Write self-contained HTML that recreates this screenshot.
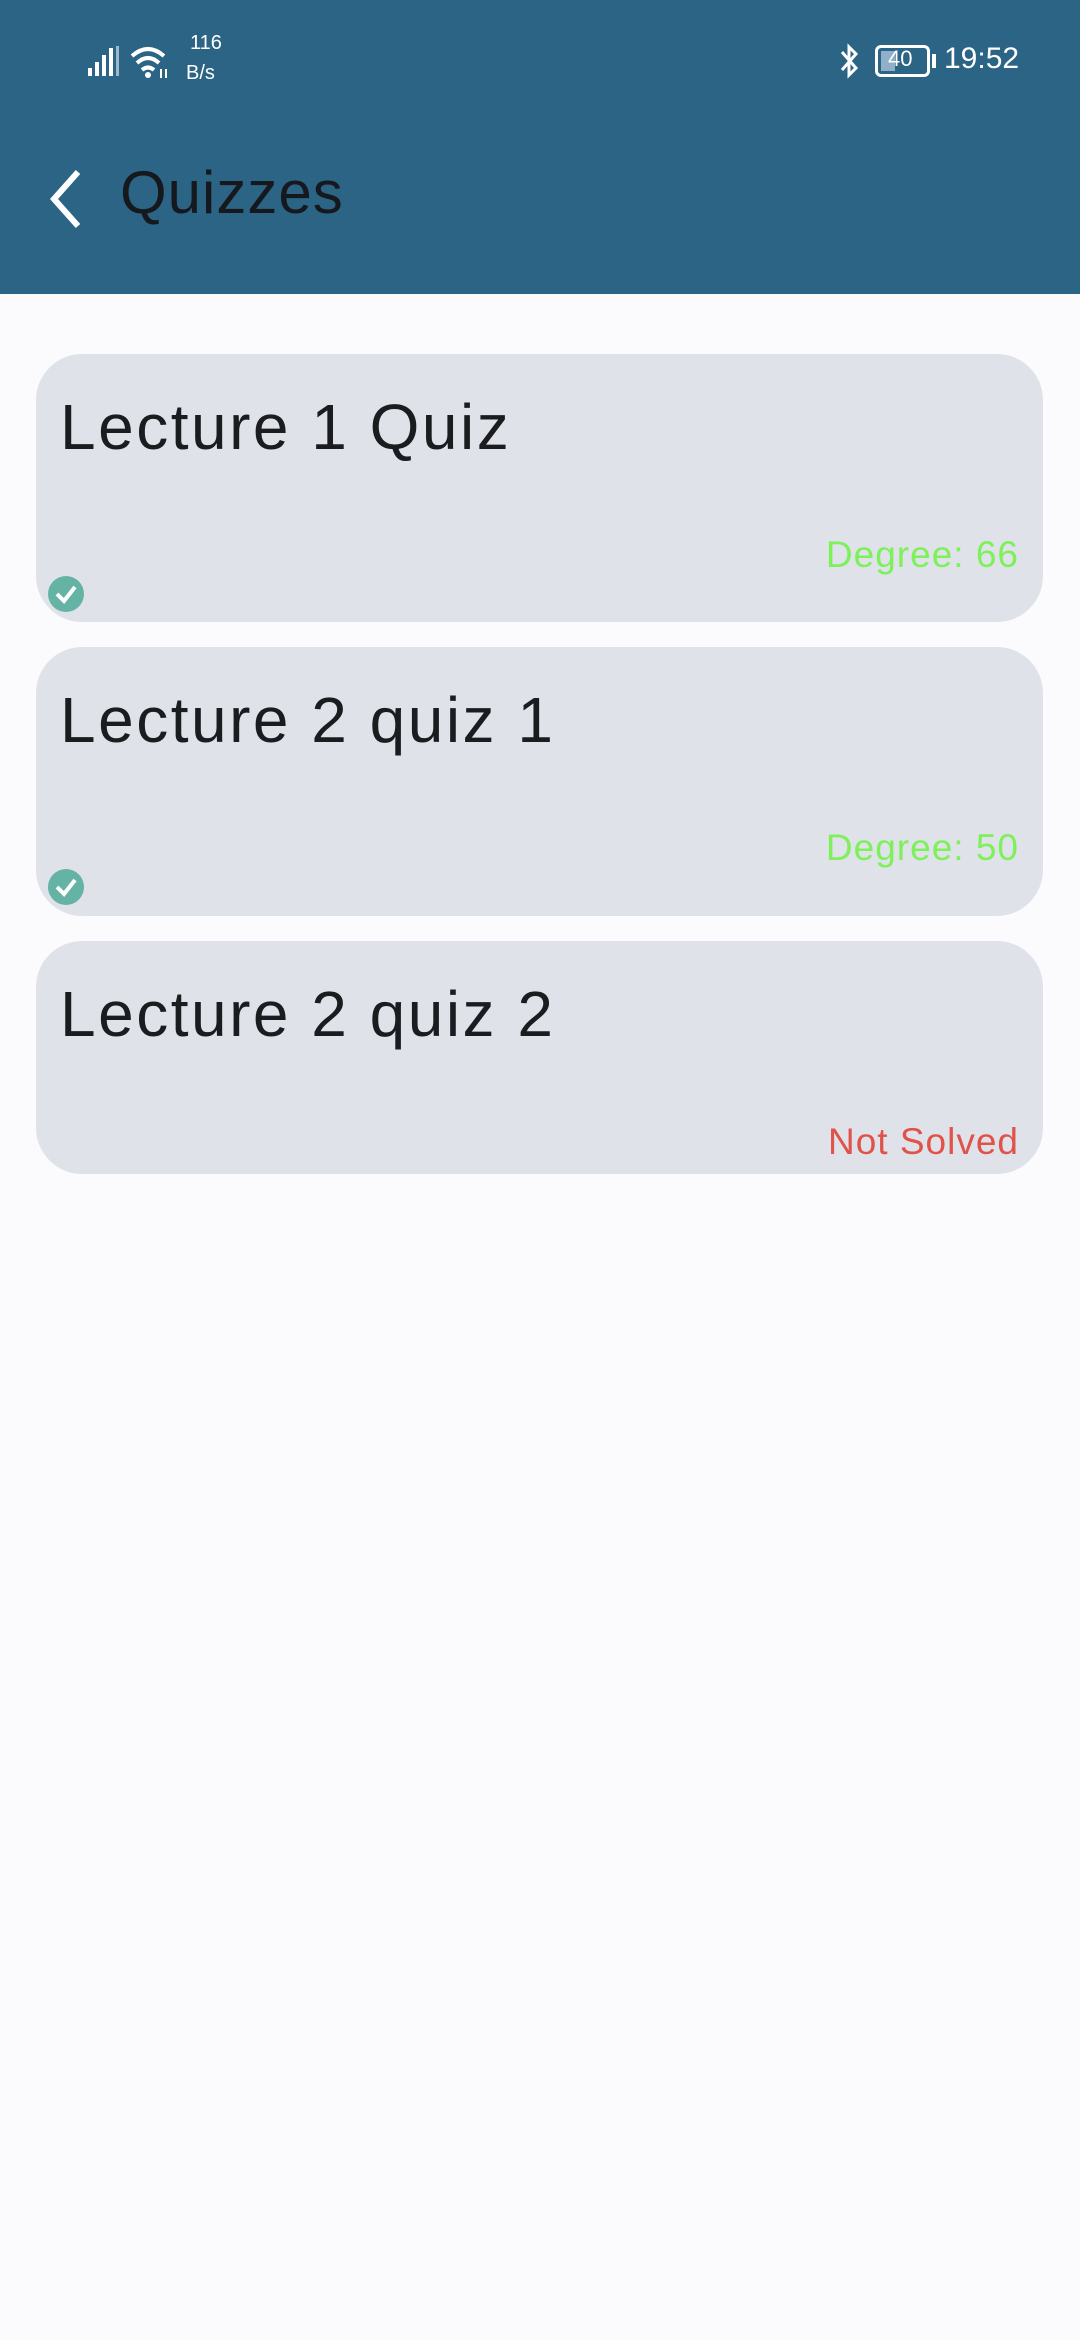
<!DOCTYPE html>
<html><head><meta charset="utf-8"><style>
*{margin:0;padding:0;box-sizing:border-box}
body{width:1080px;height:2340px;background:#fbfbfd;font-family:"Liberation Sans",sans-serif;position:relative;overflow:hidden}
.hdr{position:absolute;left:0;top:0;width:1080px;height:294px;background:#2c6486}
.st{position:absolute;color:#fff;font-size:30px}
.card{position:absolute;left:36px;width:1007px;background:#dfe3e9;border-radius:46px}
.t{position:absolute;left:24px;top:36px;font-size:64px;color:#1a1c20;letter-spacing:2.5px}
.d{position:absolute;right:24px;font-size:37px;color:#7ef05a;letter-spacing:1px}
.ck{position:absolute;left:12px;width:36px;height:36px;border-radius:50%;background:#65b3a4}
</style></head><body>
<div class="hdr">
<svg style="position:absolute;left:86px;top:44px" width="36" height="34"><rect x="2" y="24" width="4" height="8" fill="#fff"/><rect x="9" y="18" width="4" height="14" fill="#fff"/><rect x="16" y="11" width="4" height="21" fill="#fff"/><rect x="23" y="4" width="4" height="28" fill="#fff"/><rect x="30" y="2" width="3" height="30" fill="#9bb8cc"/></svg>
<svg style="position:absolute;left:128px;top:44px" width="46" height="36"><path d="M4 12 Q20 -2 36 12" stroke="#fff" stroke-width="4" fill="none"/><path d="M9 19 Q20 9 31 19" stroke="#fff" stroke-width="4" fill="none"/><path d="M14 26 Q20 21 26 26" stroke="#fff" stroke-width="4" fill="none"/><circle cx="20" cy="31" r="3" fill="#fff"/><path d="M33 25 v9 M38 25 v9" stroke="#fff" stroke-width="2"/></svg>
<div class="st" style="left:190px;top:32px;font-size:20px">116</div>
<div class="st" style="left:186px;top:62px;font-size:20px">B/s</div>
<svg style="position:absolute;left:834px;top:42px" width="30" height="38"><path d="M8 10 L22 26 L15 33 V5 L22 12 L8 28" stroke="#fff" stroke-width="3" fill="none"/></svg>
<div style="position:absolute;left:875px;top:45px;width:55px;height:32px;border:3px solid #fff;border-radius:6px"><div style="position:absolute;left:3px;top:3px;width:14px;height:20px;background:#8fb0c8"></div><span style="position:absolute;left:10px;top:-2px;color:#fff;font-size:22px">40</span></div>
<div style="position:absolute;left:932px;top:54px;width:4px;height:14px;background:#fff"></div>
<div class="st" style="left:944px;top:42px;font-size:30px">19:52</div>
<svg style="position:absolute;left:44px;top:168px" width="44" height="62"><path d="M34 4 L10 31 L34 58" stroke="#fff" stroke-width="6" fill="none"/></svg>
<div style="position:absolute;left:120px;top:158px;font-size:60px;color:#15191e;letter-spacing:1px">Quizzes</div>
</div>
<div class="card" style="top:354px;height:268px"><div class="t">Lecture 1 Quiz</div><div class="d" style="top:180px">Degree: 66</div><div class="ck" style="top:222px"><svg width="36" height="36"><path d="M9 18 L16 25 L27 11" stroke="#fff" stroke-width="4" fill="none"/></svg></div></div>
<div class="card" style="top:647px;height:269px"><div class="t">Lecture 2 quiz 1</div><div class="d" style="top:180px">Degree: 50</div><div class="ck" style="top:222px"><svg width="36" height="36"><path d="M9 18 L16 25 L27 11" stroke="#fff" stroke-width="4" fill="none"/></svg></div></div>
<div class="card" style="top:941px;height:233px"><div class="t">Lecture 2 quiz 2</div><div class="d" style="top:180px;color:#e0524a">Not Solved</div></div>
</body></html>
